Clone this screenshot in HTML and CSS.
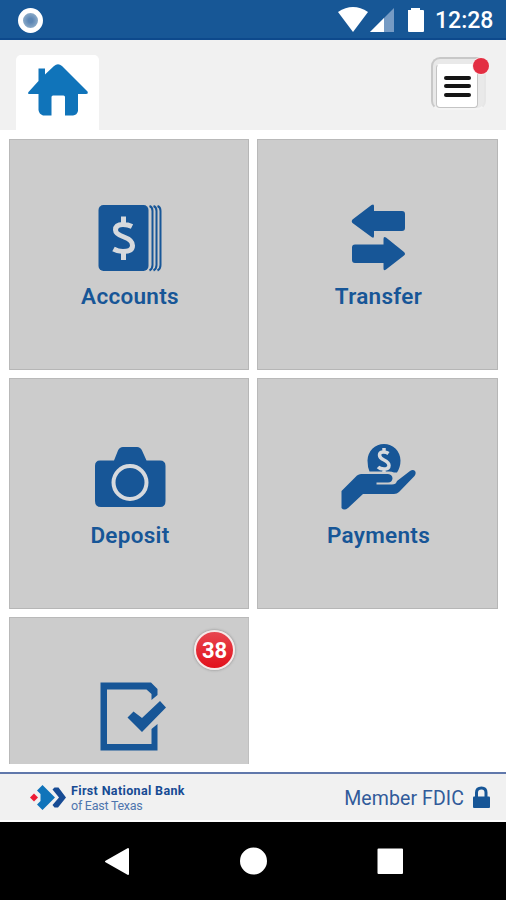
FILE: index.html
```html
<!DOCTYPE html>
<html lang="en">
<head>
<meta charset="utf-8">
<title>First National Bank of East Texas</title>
<link rel="stylesheet" href="styles.css">
</head>
<body>
<div class="screen">
  <div class="status">
    <span class="record"></span>
    <svg class="signals" viewBox="336 4 92 32"><path fill="#fff" d="M338 12Q353 2 368 12L353 32Z"/><path fill="#769bc4" d="M370 32L394 8V32Z"/><path fill="#fff" d="M370 32L384 18V32ZM408 10h3V8h9v2h3q1 0 1 1v20q0 1-1 1h-14q-1 0-1-1z"/></svg>
    <span class="clock">12:28</span>
  </div>
  <header class="header">
    <div class="tab"><svg viewBox="16 55 83 75"><path fill="#1074ba" d="M28.500 92L38.500 81V68.500H45V74.500L54 66Q58 62.500 62 66L87.500 91.500Q88.500 94 86 94H78V111Q77 115 73 115.500H65V97Q65 95.500 63.500 95.500H53Q51.500 95.500 51.500 97V115.500H43Q39 114 38.500 110V94H30Q27 94 28.500 92Z"/></svg></div>
    <button class="menu" aria-label="Menu"><span class="panel"><i></i><i></i><i></i></span><span class="dot"></span></button>
  </header>
  <main class="grid">
    <div class="tile">
      <svg class="icon" viewBox="84 199 90 80"><rect x="98.500" y="205" width="50" height="66" rx="5"/><path class="sheet" d="M149.500 206Q152.500 207 152.500 211V265Q152.500 269 149.500 270.500M153.500 206Q156.500 207 156.500 211V265Q156.500 269 153.500 270.500M157.500 206Q160.500 207 160.500 211V265Q160.500 269 157.500 270.500"/><path class="money" d="M132 226.500Q128 224.500 123 224.500Q115.500 224.500 115.500 230Q115.500 234 124 237Q132.500 240 132.500 245.500Q132.500 251.500 123 251.500Q118 251.500 113.500 249M123.500 216.500V225M123.500 251V260"/></svg>
      <span class="label">Accounts</span>
    </div>
    <div class="tile">
      <svg class="icon" viewBox="333 199 90 80"><path d="M352.500 219.500L371.500 205Q374 203.500 374 206V211H402Q405 211 405 214V228Q405 231 402 231H374V236Q374 239 371.500 237L352.500 223Q351 221.500 352.500 219.500ZM404 252L386 237.500Q383.500 236 383.500 239V244.500H355Q352 244.500 352 247.500V260Q352 263 355 263H383.500V268.500Q383.500 271.500 386 269.500L404 255.500Q406 254 404 252Z"/></svg>
      <span class="label">Transfer</span>
    </div>
    <div class="tile">
      <svg class="icon" viewBox="84 438 90 80"><path d="M100 460.500H114L118 450.500Q119.500 447 123 447H137Q140.500 447 142 450.500L146.500 460.500H160Q165.500 460.500 165.500 466V501Q165.500 507 160 507H101Q95 507 95 501V466Q95 460.500 100 460.500Z"/><circle class="lens" cx="130" cy="482.500" r="16.500"/></svg>
      <span class="label">Deposit</span>
    </div>
    <div class="tile">
      <svg class="icon" viewBox="333 438 90 80"><path d="M369.500 471.500Q367.500 467 367.500 460.500A16.500 16.500 0 0 1 400.500 460.500Q400.500 467 397 472.500H394Q392 471.500 389 471.500Z"/><path class="coin" d="M388.500 453.500Q386.500 452 383.500 452Q379.500 452 379.500 455Q379.500 458 384 460Q389 462.500 389 465.500Q389 469 384 469Q380 469 378 467M384 448V452M384 469V472"/><path d="M341.500 491L357 475.500Q359 474 361 474H388Q392.500 474.500 392.500 478.500Q392 482.500 388 482.500H376.500V484.500H392Q396 484.500 397 481L410 471Q413 469 415 471Q416.500 473 414.500 476L399 492Q397 494 394 494H363L348 508Q344 511 341.500 508Z"/></svg>
      <span class="label">Payments</span>
    </div>
    <div class="tile cut">
      <span class="badge">38</span>
      <svg class="icon" viewBox="84 677 90 80"><path fill-rule="evenodd" d="M100.500 682.500H151L157.500 689V695L151.500 700V694L146.500 689.500H107V744H151.500V729L157.500 724V750.500H100.500Z"/><path d="M127.500 717.500L133.500 711.500L142 718L160 701L166 707.500L142 732Z"/></svg>
    </div>
  </main>
  <footer class="footer">
    <svg class="logo" viewBox="28 782 40 30"><path fill="#ed1c35" d="M34 793.500L38 797.500L34 801.500L30 797.500Z"/><path fill="#1074ba" d="M37 790.500L42.500 785L55 797.500L42.500 810L37 804.500L40.500 801V794Z"/><path fill="#174b94" d="M52.500 789.500L54.500 787.500H58.500L66 797.500L58 807.500H54.500L52.500 805L59 797.500Z"/></svg>
    <div class="bank"><b>First National Bank</b><span>of East Texas</span></div>
    <span class="member">Member FDIC</span>
    <svg class="lock" viewBox="472 784 19 27"><path fill="none" stroke="#175697" stroke-width="3" d="M476.500 797V792.500Q476.500 788 481.500 788Q486 788 486 792.500V797"/><rect x="473" y="796.500" width="17" height="11.500" rx="1" fill="#175697"/></svg>
  </footer>
  <nav class="nav"><svg viewBox="0 822 506 78"><g fill="#fff" stroke="#fff" stroke-width="2" stroke-linejoin="round"><path d="M106 861.500L128 849V874Z"/><circle cx="253.500" cy="861" r="12.500"/><path d="M378.500 849.500h23.500v23.500h-23.500z"/></g></svg></nav>
</div>
</body>
</html>
```
FILE: styles.css
```css
* { box-sizing: border-box; }
body { margin: 0; background: #fff; font-family: Roboto, "Liberation Sans", sans-serif; }
svg { display: block; flex: none; }
.screen { width: 506px; height: 900px; display: flex; flex-direction: column; overflow: hidden; }
.status { height: 40px; flex: none; background: #175796; border-bottom: 2px solid #0d498c; display: flex; align-items: center; padding: 2px 12px 0 18px; }
.record { width: 25px; height: 25px; border-radius: 50%; border: 5px solid #fff; background: radial-gradient(#5c86b4 20%, #8eadca 75%); }
.signals { width: 92px; height: 32px; margin-left: auto; }
.clock { width: 59px; margin-left: 7px; padding-top: 2px; color: #fff; font-size: 23px; font-weight: 500; line-height: 32px; white-space: nowrap; }
.header { height: 90px; flex: none; background: #f1f1f1; display: flex; justify-content: space-between; padding: 15px 20px 0 16px; }
.tab { width: 83px; height: 75px; background: #fff; border-radius: 5px 5px 0 0; }
.menu { position: relative; width: 55px; height: 53px; margin: 2px 0 0; padding: 4px 0 0 3px; border: 2px solid #c8c8c8; border-right-color: #e6e6e6; border-bottom-color: #f4f4f4; border-radius: 9px; background: #e9e9e9; }
.panel { display: flex; flex-direction: column; align-items: center; gap: 4.500px; width: 42px; height: 44px; padding-top: 11px; border: 1px solid #c4c4c4; border-top-color: #fff; border-radius: 4px; background: #fff; }
.panel i { width: 27px; height: 4px; border-radius: 2px; background: #151515; }
.dot { position: absolute; top: -1px; right: -5px; width: 16px; height: 16px; border-radius: 50%; background: #e32e42; box-shadow: 0 0 0 1px #f8eeee; }
.grid { height: 634px; flex: none; display: grid; grid-template-columns: 240px 241px; grid-template-rows: 231px 231px 147px; gap: 8px; padding: 9px 8px 0 9px; overflow: hidden; }
.tile { position: relative; display: flex; flex-direction: column; align-items: center; padding-top: 60px; background: #ccc; box-shadow: inset 1px 1px #b9b9b9, inset -1px -1px #b6b6b6; }
.cut { box-shadow: inset 1px 1px #b9b9b9, inset -1px 0 #bfbfbf; }
.icon { width: 90px; height: 80px; fill: #175697; }
.icon .sheet { fill: none; stroke: #175697; stroke-width: 2; }
.money, .coin, .lens { fill: none; stroke: #d6d9dd; stroke-width: 5; }
.coin { stroke-width: 3.500; }
.lens { stroke-width: 4; }
.label { margin: 2px 0 0 2px; color: #175697; font-size: 22.500px; line-height: 30px; font-weight: 600; letter-spacing: .3px; white-space: nowrap; }
.badge { position: absolute; left: 185px; top: 13px; width: 41px; height: 40px; border: 2px solid #f5e9e9; border-radius: 50%; background: linear-gradient(#e74650, #e2101b); color: #fff; font-size: 22px; font-weight: 700; line-height: 38px; text-align: center; box-shadow: 0 0 3px #888; }
.footer { height: 50px; margin-top: 8px; flex: none; background: #f1f1f1; border-top: 2px solid #6078ab; border-bottom: 2px solid #fff; display: flex; align-items: center; padding: 0 15px 0 28px; color: #174b94; }
.logo { width: 40px; height: 30px; }
.bank { margin-left: 3px; padding-top: 1px; display: flex; flex-direction: column; white-space: nowrap; font-size: 12.500px; line-height: 15px; }
.bank b { letter-spacing: .36px; }
.bank span { color: #4e75ae; letter-spacing: -.25px; }
.member { margin-left: auto; padding-top: 2px; font-size: 19.500px; color: #315b9a; letter-spacing: .1px; white-space: nowrap; }
.lock { width: 19px; height: 27px; margin-left: 8px; }
.nav { height: 78px; flex: none; background: #000; }
.nav svg { width: 506px; height: 78px; }
```
